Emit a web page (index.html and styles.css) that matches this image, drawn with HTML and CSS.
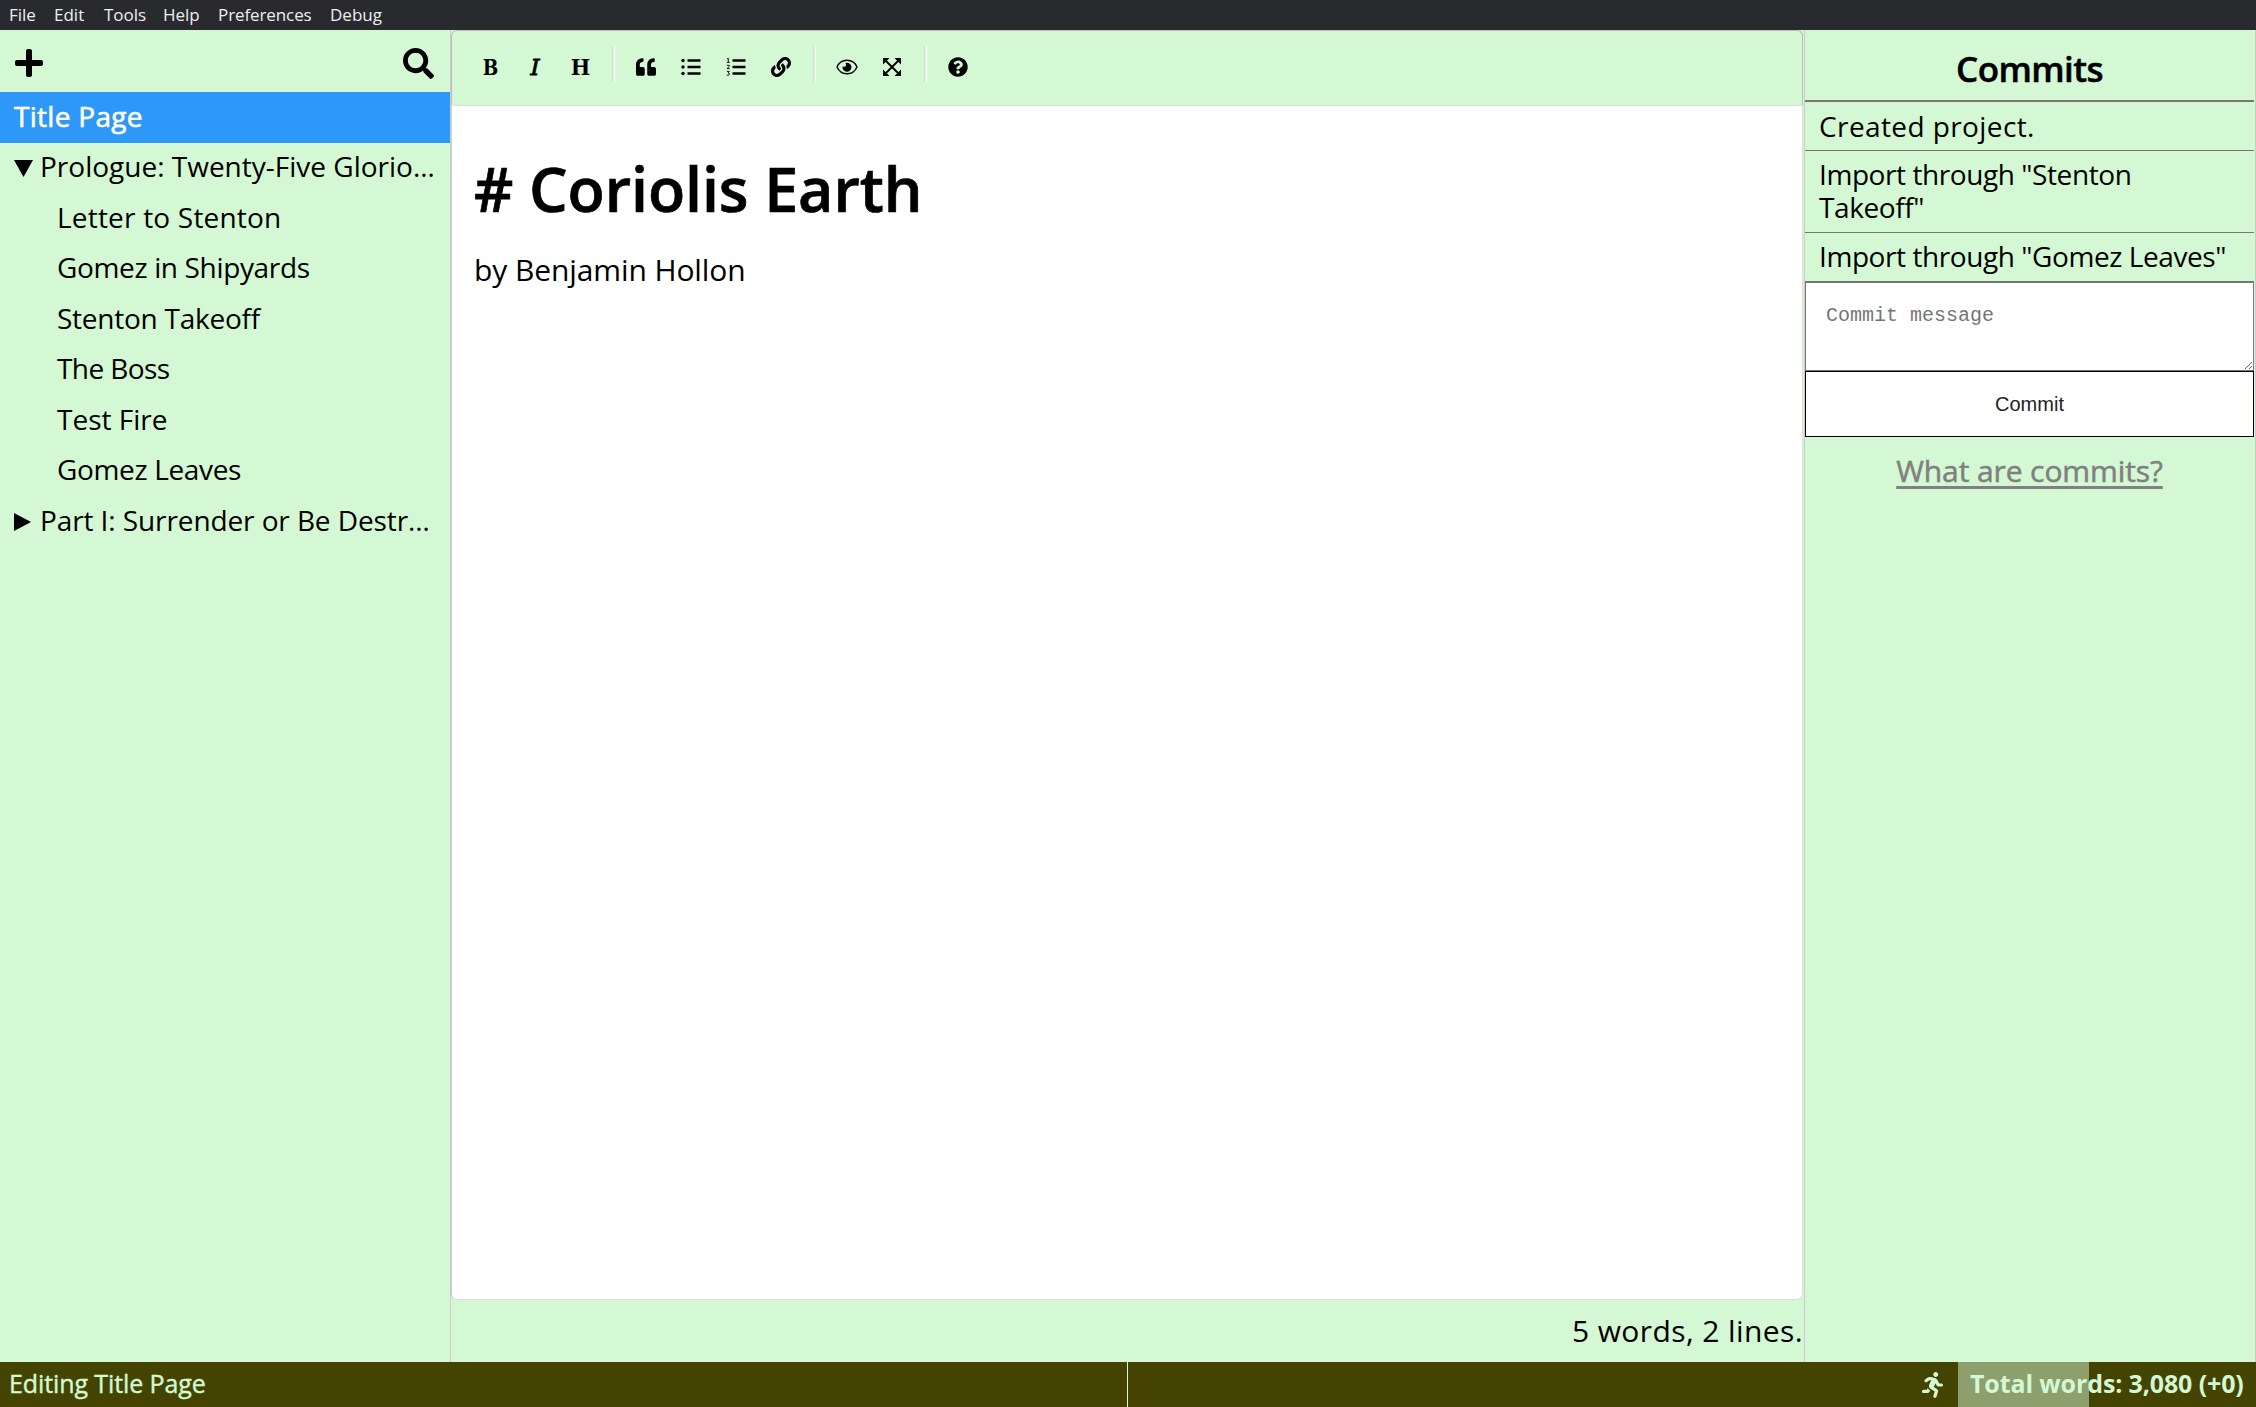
FILE: index.html
```
<!DOCTYPE html>
<html lang="en">
<head>
<meta charset="utf-8">
<title>Coriolis Earth</title>
<link rel="stylesheet" href="styles.css">
</head>
<body>
<nav class="menubar">
  <span class="m-file">File</span><span class="m-edit">Edit</span><span class="m-tools">Tools</span><span class="m-help">Help</span><span class="m-pref">Preferences</span><span>Debug</span>
</nav>
<main class="workspace">
  <aside class="sidebar">
    <div class="sidebar-actions">
      <svg class="icon-plus" viewBox="0 32 448 448"><path d="M416 208H272V64c0-17.67-14.33-32-32-32h-32c-17.67 0-32 14.33-32 32v144H32c-17.67 0-32 14.33-32 32v32c0 17.67 14.33 32 32 32h144v144c0 17.67 14.33 32 32 32h32c17.67 0 32-14.33 32-32V304h144c17.67 0 32-14.33 32-32v-32c0-17.67-14.33-32-32-32z"/></svg>
      <svg class="icon-search" viewBox="0 0 512 512"><path d="M505 442.7L405.3 343c-4.5-4.5-10.6-7-17-7H372c27.6-35.300 44-79.700 44-128C416 93.100 322.900 0 208 0S0 93.100 0 208s93.100 208 208 208c48.300 0 92.700-16.400 128-44v16.300c0 6.400 2.500 12.500 7 17l99.700 99.700c9.400 9.400 24.600 9.400 33.900 0l28.300-28.300c9.400-9.400 9.400-24.600.1-34zM208 336c-70.700 0-128-57.200-128-128 0-70.700 57.200-128 128-128 70.700 0 128 57.200 128 128 0 70.700-57.200 128-128 128z"/></svg>
    </div>
    <ul class="tree">
      <li class="row selected">Title Page</li>
      <li class="row folder"><svg class="caret" viewBox="0 0 20 20"><path d="M0 1H19L9.500 18Z"/></svg><span>Prologue: Twenty-Five Glorio…</span></li>
      <li class="row child loose">Letter to Stenton</li>
      <li class="row child tight">Gomez in Shipyards</li>
      <li class="row child snug">Stenton Takeoff</li>
      <li class="row child tighter">The Boss</li>
      <li class="row child">Test Fire</li>
      <li class="row child tight">Gomez Leaves</li>
      <li class="row folder part"><svg class="caret" viewBox="0 0 20 20"><path d="M0 1L17 10L0 19Z"/></svg><span>Part I: Surrender or Be Destr…</span></li>
    </ul>
  </aside>
  <section class="editor">
    <div class="toolbar">
      <span class="tool glyph bold">B</span>
      <span class="tool glyph italic">I</span>
      <span class="tool glyph heading">H</span>
      <i class="separator"></i>
      <span class="tool"><svg class="w20" viewBox="0 0 512 512"><path d="M464 256h-80v-64c0-35.300 28.700-64 64-64h8c13.300 0 24-10.700 24-24V56c0-13.300-10.700-24-24-24h-8c-88.400 0-160 71.600-160 160v240c0 26.500 21.500 48 48 48h128c26.500 0 48-21.500 48-48V304c0-26.500-21.500-48-48-48zm-288 0H96v-64c0-35.300 28.700-64 64-64h8c13.300 0 24-10.700 24-24V56c0-13.300-10.700-24-24-24h-8C71.600 32 0 103.600 0 192v240c0 26.500 21.500 48 48 48h128c26.500 0 48-21.500 48-48V304c0-26.500-21.500-48-48-48z"/></svg></span>
      <span class="tool"><svg class="w20" viewBox="0 0 20 20"><circle cx="2" cy="3.500" r="1.700"/><circle cx="2" cy="10" r="1.700"/><circle cx="2" cy="16.500" r="1.700"/><path d="M6.500 2.300h13v2.400h-13zM6.500 8.800h13v2.400h-13zM6.500 15.300h13v2.400h-13z"/></svg></span>
      <span class="tool"><svg class="w20" viewBox="0 0 20 20"><path d="M6.500 2.300h13v2.400h-13zM6.500 8.800h13v2.400h-13zM6.500 15.300h13v2.400h-13z"/><path class="line" d="M1 2l1.300-.7v4M.7 5.300h3.200M.8 8.300h2.500v1.200L1 11.600h2.700M.8 14.400h2.500l-1.200 1.500 1.400.8-.8 1.500H.7"/></svg></span>
      <span class="tool"><svg class="w20" viewBox="0 0 512 512"><path d="M326.612 185.391c59.747 59.809 58.927 155.698.36 214.590-.11.12-.24.25-.36.37l-67.200 67.200c-59.270 59.270-155.699 59.262-214.960 0-59.270-59.260-59.270-155.700 0-214.960l37.106-37.106c9.840-9.840 26.786-3.300 27.294 10.606.648 17.722 3.826 35.527 9.690 52.721 1.986 5.822.567 12.262-3.783 16.612l-13.087 13.087c-28.026 28.026-28.905 73.660-1.155 101.960 28.024 28.579 74.086 28.749 102.325.51l67.200-67.190c28.191-28.191 28.073-73.757 0-101.830-3.701-3.694-7.429-6.564-10.341-8.569a16.037 16.037 0 0 1-6.947-12.606c-.396-10.567 3.348-21.456 11.698-29.806l21.054-21.055c5.521-5.521 14.182-6.199 20.584-1.731a152.482 152.482 0 0 1 20.522 17.197zM467.547 44.449c-59.261-59.262-155.690-59.270-214.960 0l-67.200 67.200c-.12.12-.25.25-.36.37-58.566 58.892-59.387 154.781.36 214.590a152.454 152.454 0 0 0 20.521 17.196c6.402 4.468 15.064 3.789 20.584-1.731l21.054-21.055c8.350-8.350 12.094-19.239 11.698-29.806a16.037 16.037 0 0 0-6.947-12.606c-2.912-2.005-6.640-4.875-10.341-8.569-28.073-28.073-28.191-73.639 0-101.830l67.200-67.190c28.239-28.239 74.300-28.069 102.325.51 27.750 28.300 26.872 73.934-1.155 101.960l-13.087 13.087c-4.350 4.350-5.769 10.790-3.783 16.612 5.864 17.194 9.042 34.999 9.690 52.721.509 13.906 17.454 20.446 27.294 10.606l37.106-37.106c59.271-59.259 59.271-155.699.001-214.959z"/></svg></span>
      <i class="separator"></i>
      <span class="tool"><svg class="w22" viewBox="0 0 22 16"><path class="outline" d="M1 8C5-1 17-1 21 8C17 17 5 17 1 8Z"/><path d="M11 3.700A4.500 4.500 0 1 1 6.600 7.200Q8.800 8.600 9.800 7Q10.300 5.300 9.500 4Z"/></svg></span>
      <span class="tool"><svg class="w18" viewBox="0 0 18 18"><path d="M0 0H6.500L0 6.500ZM18 0V6.500L11.500 0ZM0 18V11.500L6.500 18ZM18 18H11.500L18 11.500Z"/><path class="cross" d="M2 2L16 16M16 2L2 16"/></svg></span>
      <i class="separator"></i>
      <span class="tool"><svg class="w20" viewBox="0 0 512 512"><path d="M504 256c0 136.997-111.043 248-248 248S8 392.997 8 256C8 119.083 119.043 8 256 8s248 111.083 248 248zM262.655 90c-54.497 0-89.255 22.957-116.549 63.758-3.536 5.286-2.353 12.415 2.715 16.258l34.699 26.310c5.205 3.947 12.621 3.008 16.665-2.122 17.864-22.658 30.113-35.797 57.303-35.797 20.429 0 45.698 13.148 45.698 32.958 0 14.976-12.363 22.667-32.534 33.976C247.128 238.528 216 254.941 216 296v4c0 6.627 5.373 12 12 12h56c6.627 0 12-5.373 12-12v-1.333c0-28.462 83.186-29.647 83.186-106.667 0-58.002-60.165-102-116.531-102zM256 338c-25.365 0-46 20.635-46 46 0 25.364 20.635 46 46 46s46-20.636 46-46c0-25.365-20.635-46-46-46z"/></svg></span>
    </div>
    <article class="page">
      <h1># Coriolis Earth</h1>
      <p>by Benjamin Hollon</p>
    </article>
    <div class="counts">5 words, 2 lines.</div>
  </section>
  <aside class="commits">
    <h2>Commits</h2>
    <ul>
      <li class="roomy">Created project.</li>
      <li>Import through "Stenton Takeoff"</li>
      <li>Import through "Gomez Leaves"</li>
    </ul>
    <textarea placeholder="Commit message"></textarea>
    <button type="button">Commit</button>
    <a>What are commits?</a>
  </aside>
</main>
<footer class="statusbar">
  <div class="status-left">Editing Title Page</div>
  <div class="status-right">
    <svg class="icon-run" viewBox="0 0 416 512"><path d="M272 96c26.510 0 48-21.490 48-48S298.510 0 272 0s-48 21.490-48 48 21.490 48 48 48zM113.690 317.470l-14.800 34.520H32c-17.670 0-32 14.330-32 32s14.330 32 32 32h77.450c19.250 0 36.580-11.440 44.110-29.090l8.790-20.520-10.670-6.300c-17.320-10.230-30.060-25.370-37.990-42.610zM384 223.990h-44.030l-26.060-53.250c-12.500-25.550-35.450-44.230-61.780-50.940l-71.080-21.140c-28.300-6.800-57.770-.55-80.840 17.140l-39.670 30.410c-14.030 10.750-16.690 30.830-5.940 44.860s30.840 16.690 44.860 5.940l39.660-30.410c7.670-5.890 17.440-8 25.270-6.140l14.700 4.370-37.460 87.390c-12.620 29.480-1.310 64.010 26.300 80.310l84.980 50.170-27.470 87.730c-5.280 16.860 4.110 34.820 20.970 40.090 3.190 1 6.410 1.480 9.580 1.480 13.610 0 26.230-8.770 30.520-22.450l31.640-101.060c5.910-20.770-2.890-43.080-21.640-54.390l-61.240-36.140 31.310-78.280 20.270 41.430c8 16.340 24.920 26.890 43.110 26.890H384c17.670 0 32-14.330 32-32s-14.330-31.990-32-31.990z"/></svg>
    <div class="total">Total words: 3,080 (+0)</div>
  </div>
</footer>
</body>
</html>
```

FILE: styles.css
```
* { box-sizing: border-box; }
body {
  margin: 0;
  height: 100vh;
  display: flex;
  flex-direction: column;
  overflow: hidden;
  background: #d3f8d3;
  color: #000;
  font: 28px "Open Sans", "Noto Sans", sans-serif;
}
h1, h2, p, ul { margin: 0; padding: 0; }
ul { list-style: none; }

.menubar {
  flex: 0 0 30px;
  display: flex;
  padding-left: 9px;
  background: #292a2e;
  color: #eee;
  font-size: 17px;
  line-height: 29px;
}
.m-file { width: 45px; }
.m-edit { width: 50px; }
.m-tools { width: 59px; }
.m-help { width: 55px; }
.m-pref { width: 112px; letter-spacing: -.1px; }

.workspace { flex: 1; display: flex; min-height: 0; }

.sidebar { width: 451px; border-right: 1px solid #ccc; }
.sidebar-actions {
  height: 62px;
  display: flex;
  justify-content: space-between;
  align-items: center;
  padding: 3px 16px 0 15px;
}
.icon-plus { width: 28px; height: 28px; }
.icon-search { width: 31px; height: 31px; margin-top: 1px; }
.row {
  height: 50.5px;
  padding: 0 14px 3px;
  display: flex;
  align-items: center;
  line-height: 47px;
  white-space: nowrap;
}
.selected {
  height: 51px;
  background: #2d98f7;
  color: #fff;
  letter-spacing: .3px;
  -webkit-text-stroke: .6px #fff;
}
.folder span { padding-left: 6px; }
.part { letter-spacing: -.1px; }
.caret { width: 20px; height: 20px; margin-top: 4px; }
.child { padding-left: 57px; }
.loose { letter-spacing: .2px; }
.tight { letter-spacing: -.35px; }
.snug { letter-spacing: -.25px; }
.tighter { letter-spacing: -.6px; }

.editor { width: 1353px; padding-right: 1px; display: flex; flex-direction: column; }
.toolbar {
  height: 75px;
  display: flex;
  padding: 15px 0 0 15.500px;
  border: 1px solid #bbb;
  border-bottom: 0;
  border-radius: 6px 6px 0 0;
}
.tool {
  width: 45px;
  height: 42px;
  display: flex;
  align-items: center;
  justify-content: center;
}
.glyph { font: bold 23px/42px "DejaVu Serif", serif; }
.italic { font-style: italic; font-weight: 400; -webkit-text-stroke: .8px #000; }
.bold { transform: scaleX(.8); }
.heading { transform: scaleX(.9); }
.separator {
  width: 3px;
  height: 36px;
  margin: 0 9px;
  border-left: 1px solid #d9d9d9;
  border-right: 1px solid #fff;
}
.w18 { width: 18px; height: 18px; }
.w20 { width: 20px; height: 20px; }
.w22 { width: 22px; height: 16px; }
.line { fill: none; stroke: #000; stroke-width: .9; }
.outline { fill: none; stroke: #000; stroke-width: 1.4; }
.cross { stroke: #000; stroke-width: 1.800; }
.page {
  flex: 1;
  padding: 41px 22px;
  background: #fff;
  border: 1px solid #ddd;
  border-left-color: #ccc;
  border-radius: 0 0 6px 6px;
}
.page h1 {
  font-size: 61px;
  font-weight: 600;
  line-height: 83px;
  letter-spacing: -.1px;
  -webkit-text-stroke: .7px #000;
}
.page p { margin-top: 20px; font-size: 30px; line-height: 40px; letter-spacing: -.1px; }
.counts { height: 62px; text-align: right; font-size: 30px; line-height: 61px; letter-spacing: .4px; }

.commits {
  flex: 1;
  display: flex;
  flex-direction: column;
  padding-right: 1px;
  border-left: 1px solid #ccc;
  border-right: 1px solid #ccc;
}
.commits h2 {
  height: 72px;
  border-bottom: 2px solid #777;
  text-align: center;
  font-size: 35px;
  font-weight: 600;
  line-height: 78px;
  letter-spacing: -.6px;
  -webkit-text-stroke: .5px #000;
}
.commits li {
  padding: 7px 22px 8px 14px;
  border-bottom: 1px solid #777;
  line-height: 33px;
  letter-spacing: -.42px;
}
.commits li.roomy { padding: 8px 14px 7px; letter-spacing: .4px; }
.commits textarea {
  display: block;
  height: 89px;
  margin: 0;
  padding: 21px 20px;
  border: 1px solid #777;
  background: #fff;
  font: 20px "Liberation Mono", monospace;
}
.commits button {
  height: 66px;
  border: 1px solid #000;
  background: #fff;
  color: #222;
  font: 20px "Liberation Sans", sans-serif;
}
.commits a {
  padding-top: 14px;
  text-align: center;
  color: #808080;
  font-size: 30px;
  line-height: 40px;
  letter-spacing: -.1px;
  -webkit-text-stroke: .5px #808080;
  text-decoration: underline;
  text-decoration-thickness: 3px;
  text-underline-offset: 4px;
  text-decoration-skip-ink: none;
}

.statusbar {
  flex: 0 0 45px;
  display: flex;
  background: #440;
  color: #d3f8d3;
  font-size: 25px;
  line-height: 43px;
}
.status-left {
  width: 1128px;
  padding-left: 9px;
  border-right: 1px solid #d3f8d3;
  letter-spacing: -.1px;
  -webkit-text-stroke: .4px #d3f8d3;
}
.status-right { flex: 1; display: flex; justify-content: flex-end; align-items: center; }
.icon-run { width: 21px; height: 26px; margin-right: 15px; fill: #d3f8d3; }
.total {
  width: 298px;
  height: 45px;
  padding-left: 12px;
  background: linear-gradient(to right, #8d9f6d 131px, #440 131px);
  font-weight: 700;
  letter-spacing: -.12px;
  white-space: nowrap;
}
```
